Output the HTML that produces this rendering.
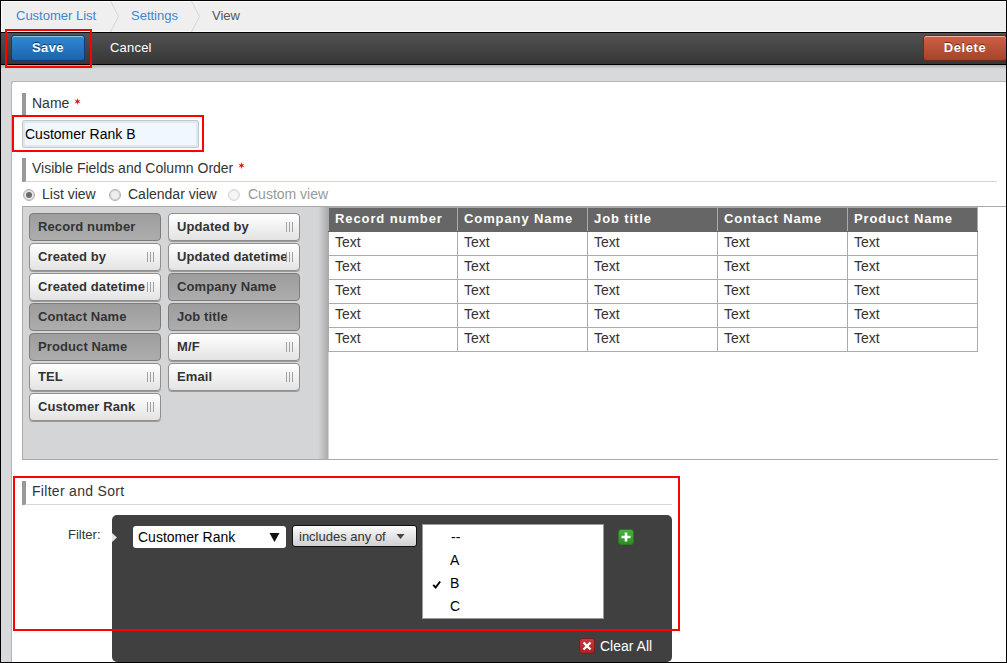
<!DOCTYPE html>
<html><head><meta charset="utf-8">
<style>
*{margin:0;padding:0;box-sizing:border-box}
html,body{width:1007px;height:663px;overflow:hidden}
body{position:relative;background:#d8d9db;font-family:"Liberation Sans",sans-serif;color:#333}
.a{position:absolute;white-space:nowrap}
#border{position:absolute;left:0;top:0;width:1007px;height:663px;border:1px solid #000;z-index:50}
#bc{position:absolute;left:0;top:0;width:1007px;height:32px;background:#efefef;box-shadow:inset 1px 1px 0 #000,inset 2px 2px 0 #fff,inset 0 -1px 0 #f8f8f8}
.bcl{position:absolute;top:0px;font-size:13px;line-height:31px;color:#3a87d4}
#tb{position:absolute;left:0;top:32px;width:1007px;height:33px;background:#000}
#tbin{position:absolute;left:0;top:1px;width:1007px;height:31px;background:linear-gradient(#525252,#363636)}
.btn{position:absolute;border-radius:3px;font-weight:bold;color:#fff;text-align:center}
#save{left:11px;top:35px;width:74px;height:26px;background:linear-gradient(#2f8ad3,#1b64ad);border:1px solid #0e3c7c;font-size:13px;letter-spacing:0.4px;line-height:24px;text-shadow:0 -1px 0 #0b3569;box-shadow:inset 0 1px 0 #8cc4ef}
#del{left:923px;top:35px;width:84px;height:26px;background:linear-gradient(#cf6045,#a4442a);border:1px solid #6e2a14;font-size:13px;letter-spacing:0.6px;line-height:23px;text-shadow:0 -1px 0 #7b2a15;box-shadow:inset 0 1px 0 #f0b4a0}
#panel{position:absolute;left:11px;top:81px;width:1000px;height:600px;background:#fff;border-top:1px solid #b4b4b4;border-left:1px solid #b4b4b4;border-radius:3px 0 0 0}
.redbox{position:absolute;border:2px solid #f00;z-index:40}
.hbar{position:absolute;left:22px;width:4px;background:#999}
.h{position:absolute;left:32px;font-size:14px;line-height:16px;color:#333;white-space:nowrap}
.req{color:#e00;font-size:13px}
.radio{position:absolute;width:12px;height:12px;border-radius:50%;border:1px solid #b0b0b0;box-shadow:inset 0 0 0 1px #d0d0d0;background:#eee}
.rl{position:absolute;font-size:14px;line-height:16px;white-space:nowrap}
#pal{position:absolute;left:22px;top:206px;width:307px;height:254px;background:#d4d5d7;border:1px solid #a9a9a9;border-right:none}
.chip{position:absolute;width:132px;height:28px;border-radius:4px;font-weight:bold;font-size:13px;line-height:26px;padding-left:8px;letter-spacing:0.1px;white-space:nowrap;overflow:hidden;color:#333}
.off{background:linear-gradient(#ffffff,#e3e3e3);border:1px solid #8f8f8f;box-shadow:0 1px 0 #9a9a9a}
.on{background:linear-gradient(#9d9d9d,#adadad);border:1px solid #7c7c7c}
.hd{position:absolute;top:8px;width:7px;height:10px;border-left:1px solid #a0a0a0;border-right:1px solid #a0a0a0}
.hd:after{content:"";position:absolute;left:2px;top:0;width:1px;height:10px;background:#a0a0a0}
table{position:absolute;left:328px;top:207px;border-collapse:collapse;table-layout:fixed;width:650px;font-size:14px}
td,th{height:24px;border:1px solid #ababab;padding:0 0 4px 6px;text-align:left;white-space:nowrap;overflow:hidden}
th{border-bottom-color:#666;background:#666;color:#fff;font-weight:bold;font-size:13px;line-height:18px;letter-spacing:0.9px;padding-top:1px;padding-bottom:3px}
td{color:#333;line-height:18px}
#fpanel{position:absolute;left:112px;top:515px;width:560px;height:147px;background:#404040;border-radius:5px}
</style></head><body>
<div id="bc">
  <div class="bcl" style="left:16px">Customer List</div>
  <svg class="a" style="left:0;top:0" width="1007" height="32"><polyline points="110.5,1 118.5,16.5 110.5,32" fill="none" stroke="#d6d6d6" stroke-width="1"/><polyline points="191.5,1 199.5,16.5 191.5,32" fill="none" stroke="#d6d6d6" stroke-width="1"/></svg>
  <div class="bcl" style="left:131px">Settings</div>
  <div class="bcl" style="left:212px;color:#555">View</div>
</div>
<div id="tb"><div id="tbin"></div></div>
<div class="btn" id="save">Save</div>
<div class="a" style="left:110px;top:31px;font-size:13px;letter-spacing:0.2px;line-height:33px;color:#fff">Cancel</div>
<div class="btn" id="del">Delete</div>

<div class="a" style="left:0;top:65px;width:1007px;height:4px;background:linear-gradient(rgba(0,0,0,.2),rgba(0,0,0,0))"></div>
<div id="panel"></div>

<div class="hbar" style="top:93px;height:22px"></div>
<div class="h" style="top:95px">Name</div><svg class="a" style="left:73px;top:97px" width="9" height="9"><path d="M4.5 1.6v5.8M1.9 3l5.2 3M7.1 3l-5.2 3" stroke="#e44" stroke-width="1"/><ellipse cx="4.5" cy="4.6" rx="1.6" ry="1.1" fill="#d00"/></svg>
<div class="a" style="left:22px;top:120px;width:177px;height:28px;background:#f0f7fd;border:1px solid #c4c9cd;border-radius:2px;box-shadow:inset 0 0 0 2px #dfe8f0;font-size:14px;line-height:26px;padding-left:2px;color:#000">Customer Rank B</div>

<div class="hbar" style="top:158px;height:24px"></div>
<div class="a" style="left:25px;top:181px;width:972px;height:1px;background:#d9d3cf"></div>
<div class="h" style="top:160px">Visible Fields and Column Order</div><svg class="a" style="left:237px;top:161px" width="9" height="9"><path d="M4.5 1.6v5.8M1.9 3l5.2 3M7.1 3l-5.2 3" stroke="#e44" stroke-width="1"/><ellipse cx="4.5" cy="4.6" rx="1.6" ry="1.1" fill="#d00"/></svg>

<div class="radio" style="left:23px;top:189px"><div style="position:absolute;left:2px;top:2px;width:6px;height:6px;border-radius:50%;background:#6a6a6a"></div></div>
<div class="rl" style="left:42px;top:186px">List view</div>
<div class="radio" style="left:109px;top:189px"></div>
<div class="rl" style="left:128px;top:186px">Calendar view</div>
<div class="radio" style="left:228px;top:189px;opacity:.5"></div>
<div class="rl" style="left:248px;top:186px;color:#999">Custom view</div>

<div class="a" style="left:22px;top:206px;width:984px;height:1px;background:#a9a9a9"></div>
<div id="pal"></div>
<div class="a" style="left:318px;top:207px;width:10px;height:252px;background:linear-gradient(90deg,rgba(0,0,0,0),rgba(0,0,0,.2))"></div>
<div class="a" style="left:22px;top:459px;width:976px;height:1px;background:#a9a9a9"></div>

<!-- chips col 0 -->
<div class="chip on" style="left:29px;top:213px">Record number</div>
<div class="chip off" style="left:29px;top:243px">Created by<div class="hd" style="left:117px"></div></div>
<div class="chip off" style="left:29px;top:273px">Created datetime<div class="hd" style="left:117px"></div></div>
<div class="chip on" style="left:29px;top:303px">Contact Name</div>
<div class="chip on" style="left:29px;top:333px">Product Name</div>
<div class="chip off" style="left:29px;top:363px">TEL<div class="hd" style="left:117px"></div></div>
<div class="chip off" style="left:29px;top:393px">Customer Rank<div class="hd" style="left:117px"></div></div>
<!-- chips col 1 -->
<div class="chip off" style="left:168px;top:213px">Updated by<div class="hd" style="left:117px"></div></div>
<div class="chip off" style="left:168px;top:243px">Updated datetime<div class="hd" style="left:117px"></div></div>
<div class="chip on" style="left:168px;top:273px">Company Name</div>
<div class="chip on" style="left:168px;top:303px">Job title</div>
<div class="chip off" style="left:168px;top:333px">M/F<div class="hd" style="left:117px"></div></div>
<div class="chip off" style="left:168px;top:363px">Email<div class="hd" style="left:117px"></div></div>

<table>
<colgroup><col style="width:129px"><col style="width:130px"><col style="width:130px"><col style="width:130px"><col style="width:130px"></colgroup>
<tr><th>Record number</th><th>Company Name</th><th>Job title</th><th>Contact Name</th><th>Product Name</th></tr>
<tr><td>Text</td><td>Text</td><td>Text</td><td>Text</td><td>Text</td></tr>
<tr><td>Text</td><td>Text</td><td>Text</td><td>Text</td><td>Text</td></tr>
<tr><td>Text</td><td>Text</td><td>Text</td><td>Text</td><td>Text</td></tr>
<tr><td>Text</td><td>Text</td><td>Text</td><td>Text</td><td>Text</td></tr>
<tr><td>Text</td><td>Text</td><td>Text</td><td>Text</td><td>Text</td></tr>
</table>

<!-- Filter and sort -->
<div class="hbar" style="top:481px;height:24px"></div>
<div class="a" style="left:25px;top:504px;width:647px;height:1px;background:#d6d6d6"></div>
<div class="h" style="top:483px;letter-spacing:0.3px">Filter and Sort</div>
<div class="a" style="left:68px;top:527px;font-size:13px;line-height:16px">Filter:</div>
<div id="fpanel"></div>
<svg class="a" style="left:112px;top:532px" width="7" height="12"><polygon points="0,1 5,5.5 0,10" fill="#e4e4e4"/></svg>
<div class="a" style="left:133px;top:526px;width:153px;height:22px;background:#fff;border-radius:3px;font-size:14px;line-height:22px;padding-left:5px;color:#000">Customer Rank</div>
<svg class="a" style="left:269px;top:532px" width="12" height="11"><polygon points="0.5,1 10.5,1 5.5,10" fill="#111"/></svg>
<div class="a" style="left:292px;top:525px;width:125px;height:22px;background:linear-gradient(#fbfbfb,#d0d0d0);border:1px solid #111;border-radius:3px;font-size:13px;line-height:21px;padding-left:6px;color:#333">includes any of</div>
<svg class="a" style="left:396px;top:533px" width="10" height="8"><polygon points="0.5,1 8.5,1 4.5,6" fill="#444"/></svg>
<div class="a" style="left:422px;top:524px;width:182px;height:95px;background:#fff;border:1px solid #9a9a9a"></div>
<div class="a" style="left:451px;top:529px;font-size:14px;line-height:16px;color:#000">--</div>
<div class="a" style="left:450px;top:552px;font-size:14px;line-height:16px;color:#000">A</div>
<div class="a" style="left:450px;top:575px;font-size:14px;line-height:16px;color:#000">B</div>
<div class="a" style="left:450px;top:598px;font-size:14px;line-height:16px;color:#000">C</div>
<svg class="a" style="left:432px;top:580px" width="10" height="10"><polyline points="1.2,4.8 3.6,7.5 8.2,1.5" fill="none" stroke="#000" stroke-width="1.9"/></svg>
<div class="a" style="left:618px;top:529px;width:16px;height:16px;border-radius:3px;background:linear-gradient(#44b33a,#2c8f22);border:1px solid #2a7a21"></div>
<svg class="a" style="left:618px;top:529px" width="16" height="16"><path d="M8 3.5v9M3.5 8h9" stroke="#fff" stroke-width="2.6"/></svg>
<div class="a" style="left:579px;top:638px;width:16px;height:16px;border-radius:3px;background:linear-gradient(#c63a3a,#a82424);border:1px solid #7a1a1a"></div>
<svg class="a" style="left:579px;top:638px" width="16" height="16"><path d="M4.5 4.5l7 7M11.5 4.5l-7 7" stroke="#fff" stroke-width="2.4"/></svg>
<div class="a" style="left:600px;top:638px;font-size:14px;line-height:16px;color:#fff">Clear All</div>

<div class="redbox" style="left:5px;top:29px;width:87px;height:39px"></div>
<div class="redbox" style="left:12px;top:115px;width:192px;height:37px"></div>
<div class="redbox" style="left:13px;top:476px;width:667px;height:155px"></div>
<div id="border"></div>
</body></html>
